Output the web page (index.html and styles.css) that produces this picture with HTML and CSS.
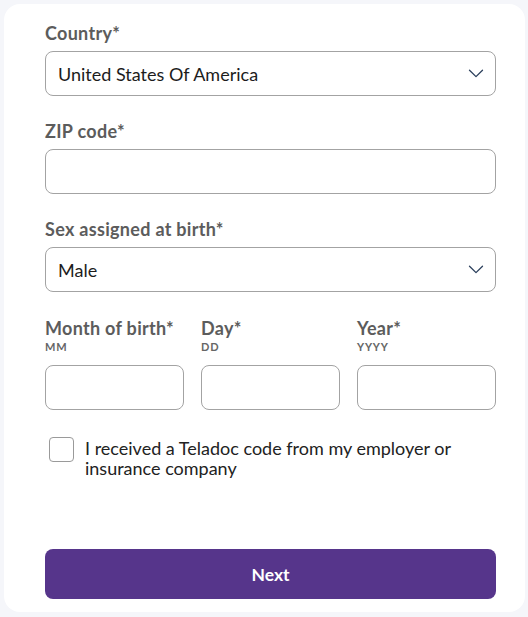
FILE: index.html
```html
<!DOCTYPE html>
<html lang="en">
<head>
<meta charset="utf-8">
<link rel="stylesheet" href="styles.css">
</head>
<body>
<div class="card">
  <div class="field">
    <div class="label">Country*</div>
    <div class="input select">
      <span class="value">United States Of America</span>
      <svg class="chev" width="16" height="9" viewBox="0 0 16 9"><path d="M1.5 1.2 L8 7.6 L14.5 1.2" fill="none" stroke="#2b3f5c" stroke-width="1.3" stroke-linecap="round" stroke-linejoin="round"/></svg>
    </div>
  </div>
  <div class="field">
    <div class="label">ZIP code*</div>
    <div class="input"></div>
  </div>
  <div class="field">
    <div class="label">Sex assigned at birth*</div>
    <div class="input select">
      <span class="value">Male</span>
      <svg class="chev" width="16" height="9" viewBox="0 0 16 9"><path d="M1.5 1.2 L8 7.6 L14.5 1.2" fill="none" stroke="#2b3f5c" stroke-width="1.3" stroke-linecap="round" stroke-linejoin="round"/></svg>
    </div>
  </div>
  <div class="dob">
    <div class="dcol">
      <div class="label">Month of birth*</div>
      <div class="hint">MM</div>
      <div class="input"></div>
    </div>
    <div class="dcol">
      <div class="label">Day*</div>
      <div class="hint">DD</div>
      <div class="input"></div>
    </div>
    <div class="dcol">
      <div class="label">Year*</div>
      <div class="hint">YYYY</div>
      <div class="input"></div>
    </div>
  </div>
  <div class="check">
    <div class="box"></div>
    <div class="ctext">I received a Teladoc code from my employer or insurance company</div>
  </div>
  <div class="btn">Next</div>
</div>
</body>
</html>
```
FILE: styles.css
```css
html, body {
  margin: 0;
  padding: 0;
}
body {
  background: #f5f6fa;
  font-family: Lato, "Open Sans", sans-serif;
  width: 528px;
  height: 617px;
  overflow: hidden;
}
.card {
  box-sizing: border-box;
  margin: 4px 3px 0 4px;
  height: 608px;
  background: #ffffff;
  border-radius: 16px;
  padding: 17px 29px 13px 41px;
  display: flex;
  flex-direction: column;
}
.field {
  margin-bottom: 23px;
}
.label {
  font-size: 18px;
  font-weight: 700;
  color: #5c5c5c;
  letter-spacing: 0.3px;
  line-height: 24px;
  height: 24px;
  margin-bottom: 6px;
}
.input {
  box-sizing: border-box;
  height: 45px;
  border: 1px solid #a3a3a3;
  border-radius: 8px;
  background: #fff;
}
.select {
  display: flex;
  align-items: center;
  justify-content: space-between;
  padding: 0 11px 0 12px;
}
.value {
  font-size: 18px;
  color: #1c1c1c;
}
.chev {
  display: block;
}
.dob {
  display: grid;
  grid-template-columns: 1fr 1fr 1fr;
  column-gap: 17px;
  margin-top: 1px;
}
.dob .label {
  margin-bottom: 0;
}
.hint {
  font-size: 11px;
  font-weight: 700;
  color: #666;
  line-height: 14px;
  letter-spacing: 0.8px;
  margin-bottom: 11px;
}
.check {
  display: flex;
  align-items: flex-start;
  margin-top: 27px;
  padding-left: 4px;
}
.box {
  box-sizing: border-box;
  width: 25px;
  height: 25px;
  border: 1px solid #9a9a9a;
  border-radius: 4px;
  flex: none;
  margin-right: 11px;
}
.ctext {
  font-size: 18px;
  color: #222;
  line-height: 20px;
  margin-top: 1px;
}
.btn {
  margin-top: auto;
  height: 50px;
  border-radius: 8px;
  background: #56358b;
  color: #ffffff;
  font-size: 17.5px;
  font-weight: 700;
  display: flex;
  align-items: center;
  justify-content: center;
}
```
